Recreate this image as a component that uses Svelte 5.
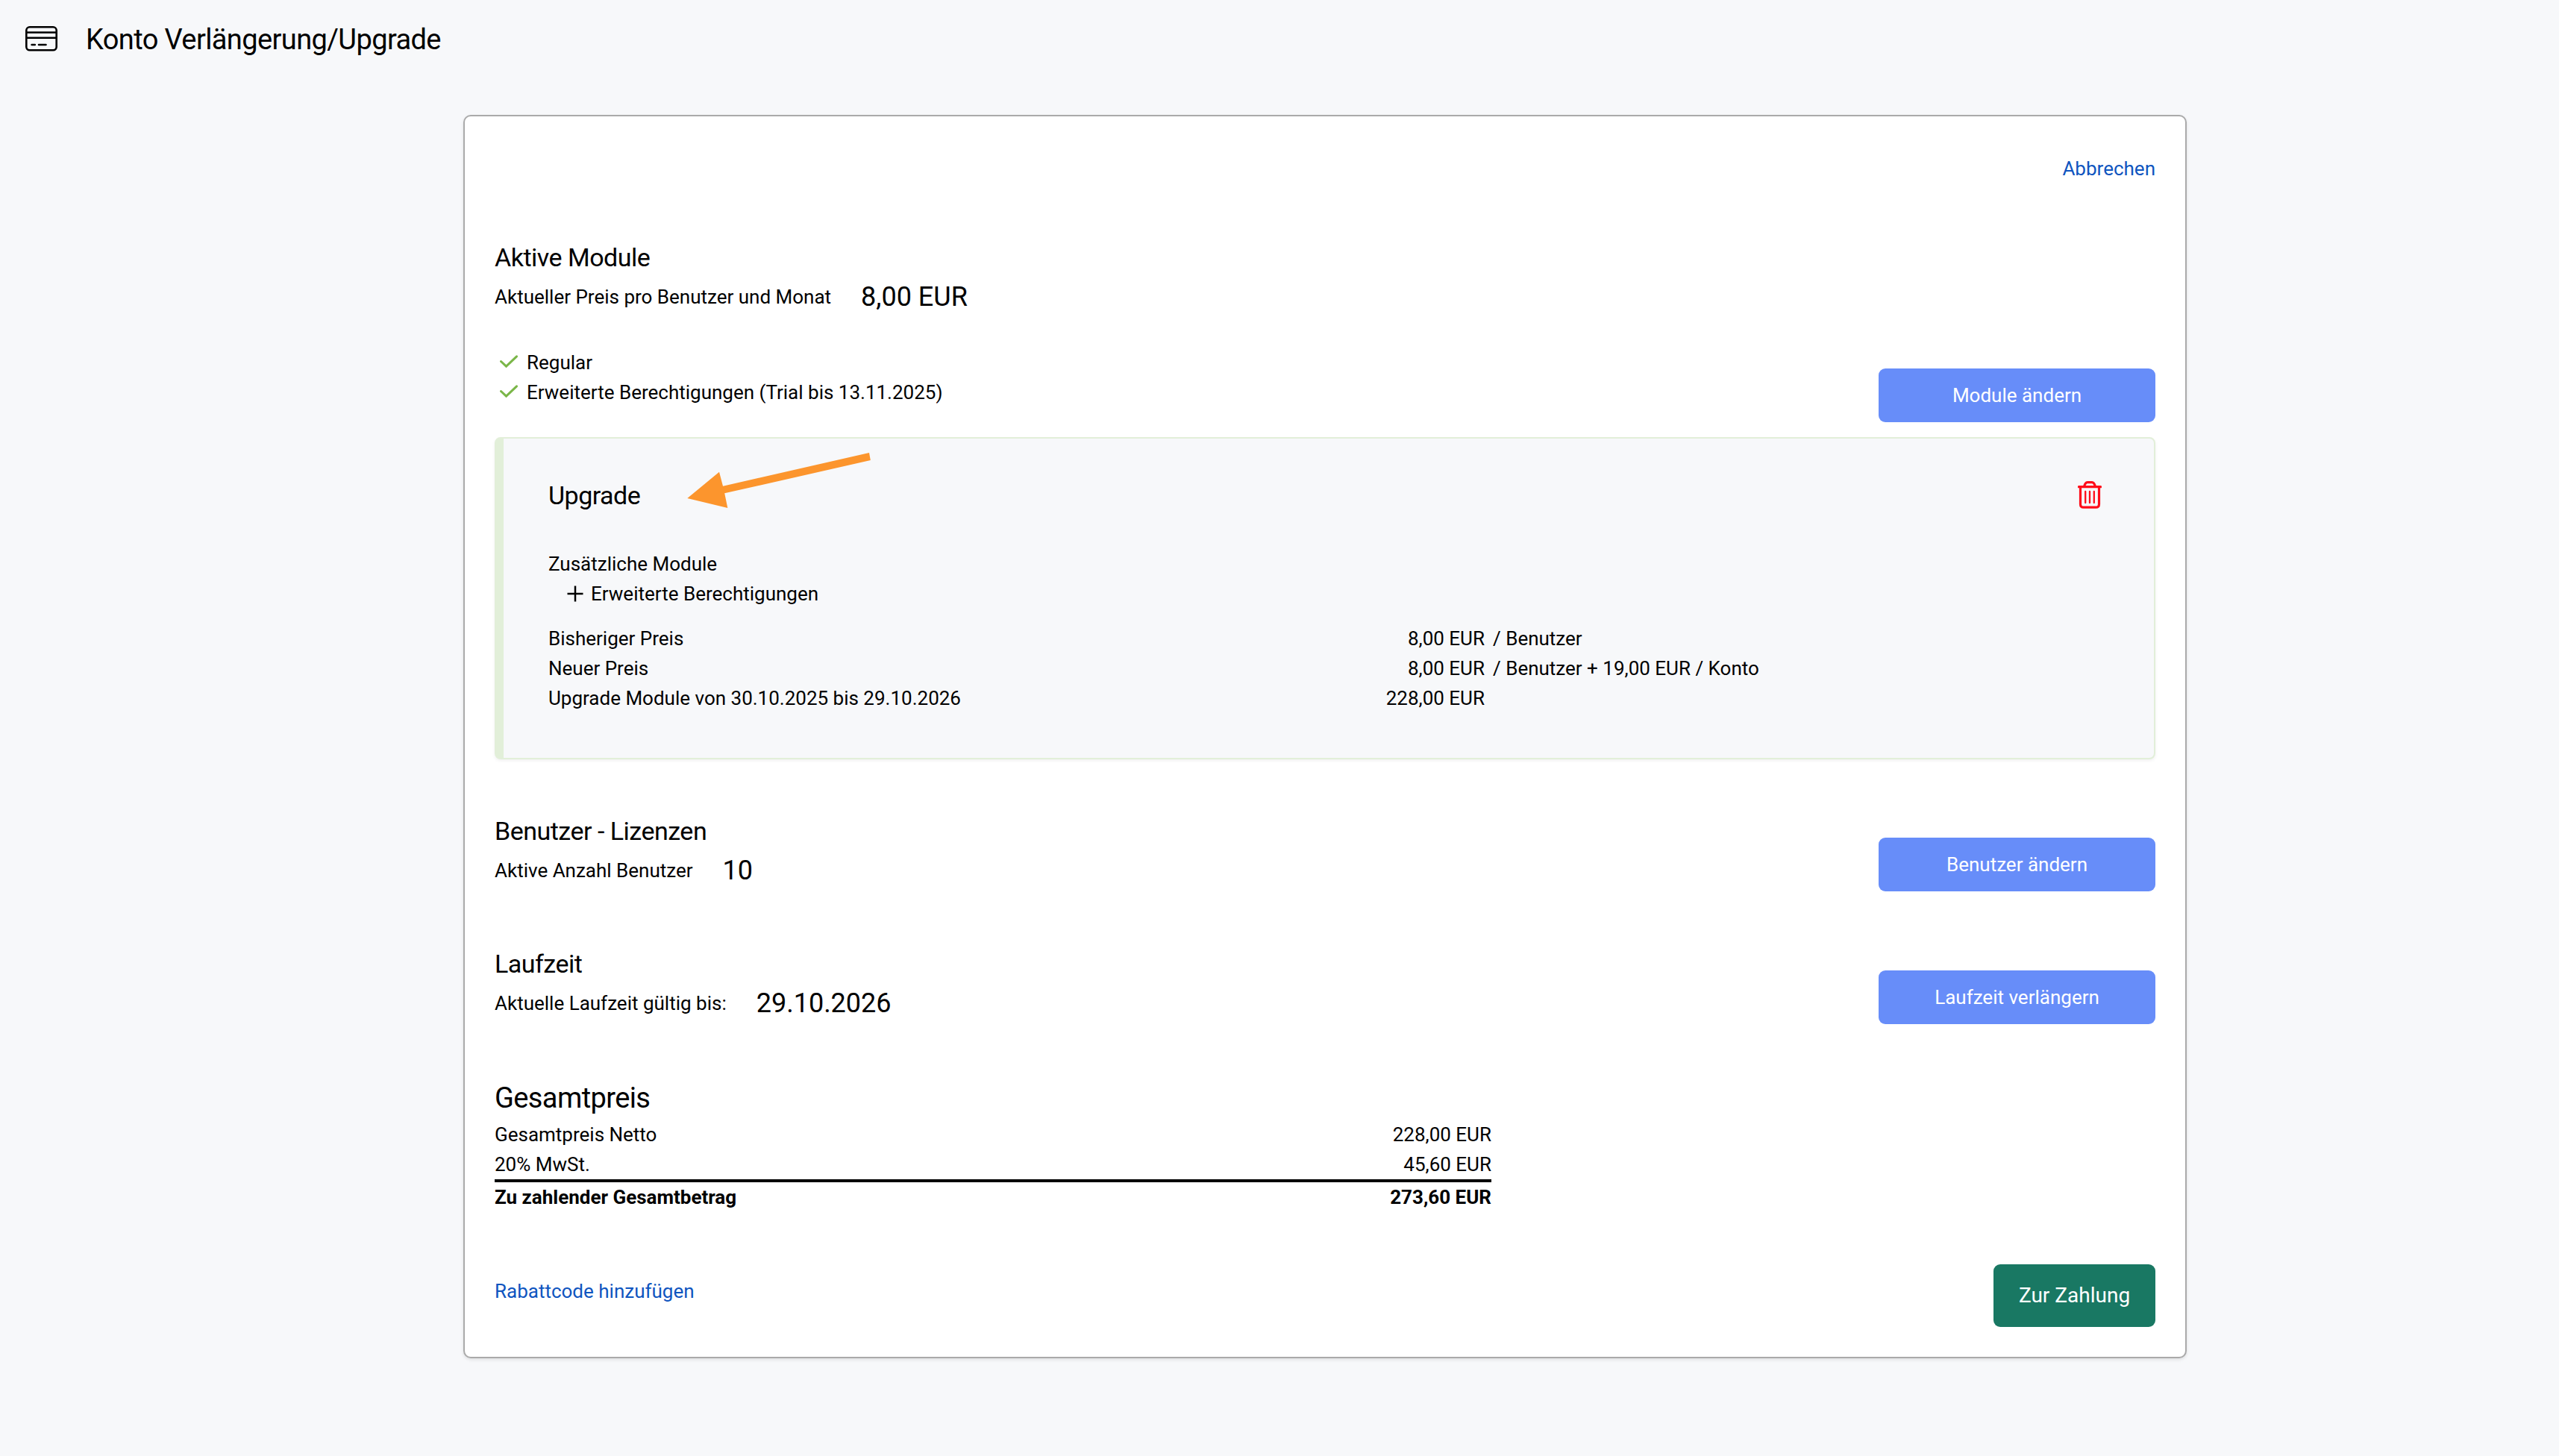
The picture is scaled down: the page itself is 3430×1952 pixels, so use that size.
<script>
  const modules = ["Regular", "Erweiterte Berechtigungen (Trial bis 13.11.2025)"];

  const prices = [
    { label: "Bisheriger Preis", amount: "8,00 EUR", unit: "/ Benutzer" },
    { label: "Neuer Preis", amount: "8,00 EUR", unit: "/ Benutzer + 19,00 EUR / Konto" },
    { label: "Upgrade Module von 30.10.2025 bis 29.10.2026", amount: "228,00 EUR", unit: "" },
  ];

  const totals = [
    { label: "Gesamtpreis Netto", amount: "228,00 EUR" },
    { label: "20% MwSt.", amount: "45,60 EUR" },
  ];
</script>

<div class="page">
  <header>
    <svg class="card-icon" viewBox="0 0 43 34" aria-hidden="true">
      <rect x="1.3" y="1.3" width="40.4" height="31" rx="4.5" />
      <path d="M1.3 8.5h40.4M1.3 15.700h40.4" />
      <path d="M8.600 25h4.200M18 25h9.500" stroke-linecap="round" />
    </svg>
    <h1>Konto Verlängerung/Upgrade</h1>
  </header>

  <main>
    <div class="top"><a href="#cancel">Abbrechen</a></div>

    <section class="modules">
      <div>
        <h2>Aktive Module</h2>
        <p class="fact">Aktueller Preis pro Benutzer und Monat <strong>8,00 EUR</strong></p>
        <ul>
          {#each modules as name}
            <li>
              <svg class="check" viewBox="0 0 24 18" aria-hidden="true"><path d="M1.500 8.500L8.500 15.200L22.500 1.800" /></svg>
              {name}
            </li>
          {/each}
        </ul>
      </div>
      <button>Module ändern</button>
    </section>

    <section class="upgrade">
      <svg class="arrow" viewBox="0 0 246 76" aria-hidden="true">
        <path d="M0.300 61L43 25.700L48 44.700L244 0L245.800 10L50.200 54.300L54.300 74z" />
      </svg>
      <div class="head">
        <h2>Upgrade</h2>
        <svg class="trash" viewBox="0 0 32 37" aria-hidden="true">
          <path d="M1.500 7.700h29M3.500 8v23q0 4.200 4.200 4.200h16.600q4.200 0 4.200-4.200V8M8.500 7.500q1.500-5.800 4.500-5.800h6q3 0 4.500 5.800" />
          <path class="thin" d="M10.200 14v15M16 14v15M21.800 14v15" />
        </svg>
      </div>
      <p>Zusätzliche Module</p>
      <p class="added">
        <svg class="plus" viewBox="0 0 22 22" aria-hidden="true"><path d="M11 0.500v21M0.500 11h21" /></svg>
        Erweiterte Berechtigungen
      </p>
      <div class="prices">
        {#each prices as row}
          <span>{row.label}</span>
          <span class="amount">{row.amount}</span>
          <span>{row.unit}</span>
        {/each}
      </div>
    </section>

    <section class="users">
      <div>
        <h2>Benutzer - Lizenzen</h2>
        <p class="fact">Aktive Anzahl Benutzer <strong>10</strong></p>
      </div>
      <button>Benutzer ändern</button>
    </section>

    <section class="term">
      <div>
        <h2>Laufzeit</h2>
        <p class="fact">Aktuelle Laufzeit gültig bis: <strong>29.10.2026</strong></p>
      </div>
      <button>Laufzeit verlängern</button>
    </section>

    <div class="total">
      <h2>Gesamtpreis</h2>
      {#each totals as row}
        <div class="row"><span>{row.label}</span><span>{row.amount}</span></div>
      {/each}
      <div class="row sum"><span>Zu zahlender Gesamtbetrag</span><span>273,60 EUR</span></div>
    </div>

    <footer>
      <a href="#discount">Rabattcode hinzufügen</a>
      <button class="pay">Zur Zahlung</button>
    </footer>
  </main>
</div>

<style>
  :global(body) { background: #f7f8fa; }
  .page {
    height: 1952px;
    overflow: hidden;
    font-family: Roboto, sans-serif;
    font-size: 26px;
    line-height: 40px;
    color: #000;
  }
  h1, h2, p, ul { margin: 0; padding: 0; font-weight: 400; }
  ul { list-style: none; }
  svg { flex: none; fill: none; stroke: currentColor; }
  header {
    display: flex;
    align-items: center;
    gap: 38px;
    height: 106px;
    padding-left: 34px;
  }
  .card-icon { width: 43px; height: 34px; margin-bottom: 2px; stroke-width: 2.6; }
  h1 { font-size: 38px; letter-spacing: -0.6px; }
  main {
    box-sizing: border-box;
    width: 2310px;
    height: 1667px;
    margin: 48px 0 0 621px;
    padding: 0 40px;
    background: #fff;
    border: 2px solid #aaa;
    border-radius: 10px;
    box-shadow: 0 2px 4px rgb(0 0 0 / 0.1);
  }
  a { color: #0f55bf; text-decoration: none; }
  .top { display: flex; justify-content: flex-end; padding-top: 50px; }
  section { display: flex; justify-content: space-between; }
  h2 { font-size: 34px; line-height: 50px; letter-spacing: -0.5px; }
  .fact { display: flex; align-items: center; gap: 40px; height: 56px; }
  .fact strong { font-size: 36px; font-weight: 400; }
  button {
    width: 371px;
    height: 72px;
    padding: 0;
    border: none;
    border-radius: 9px;
    background: #678df9;
    color: #fff;
    font: inherit;
  }
  .modules { align-items: flex-end; height: 320px; }
  .modules > div { align-self: flex-start; padding-top: 74px; }
  .modules ul { padding-top: 40px; }
  .modules li { display: flex; align-items: center; gap: 12px; padding-left: 7px; }
  .check { width: 24px; height: 18px; margin-bottom: 2px; stroke: #7ab648; stroke-width: 3; stroke-linecap: round; }
  .upgrade {
    position: relative;
    display: block;
    box-sizing: border-box;
    height: 432px;
    margin-top: 20px;
    padding: 51px 70px 0 60px;
    background: #f7f8fa;
    border: 2px solid #e2efd9;
    border-left-width: 12px;
    border-radius: 8px;
    box-shadow: 0 2px 4px rgb(0 0 0 / 0.06);
  }
  .arrow { position: absolute; left: 246px; top: 19px; width: 246px; height: 76px; fill: #fc952d; stroke: none; }
  .head { display: flex; align-items: center; justify-content: space-between; height: 50px; margin-bottom: 47px; }
  .trash { width: 32px; height: 37px; margin-bottom: 1px; color: #ff0d1a; stroke-width: 3.2; stroke-linecap: round; }
  .trash .thin { stroke-width: 2.3; }
  .added { display: flex; align-items: center; gap: 10px; padding-left: 25px; }
  .plus { width: 22px; height: 22px; stroke-width: 2.5; }
  .prices { display: grid; grid-template-columns: 1056px 200px 1fr; margin-top: 20px; }
  .amount { margin-right: 1px; text-align: right; }
  .amount + span { padding-left: 10px; }
  .users { margin-top: 71px; height: 178px; }
  .term { height: 178px; }
  .users button, .term button { margin-top: 34px; }
  .total { width: 1336px; padding-top: 1px; }
  .total h2 { margin-bottom: 3px; font-size: 38px; line-height: 52px; letter-spacing: -0.6px; }
  .row { display: flex; justify-content: space-between; }
  .sum { border-top: 4px solid #000; font-weight: 700; }
  footer { display: flex; justify-content: space-between; margin-top: 70px; }
  footer a { padding-top: 16px; }
  .pay { width: 217px; height: 84px; background: #197863; font-size: 28px; }
</style>
